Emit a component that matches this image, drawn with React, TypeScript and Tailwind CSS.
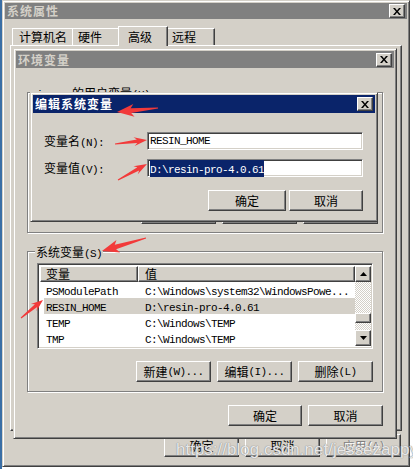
import React from 'react';

const raised =
  'border border-t-white border-l-white border-r-[#404040] border-b-[#404040] shadow-[inset_-1px_-1px_#808080]';
const winFrame =
  'border border-t-[#d4d0c8] border-l-[#d4d0c8] border-r-[#404040] border-b-[#404040] shadow-[inset_1px_1px_#fff,inset_-1px_-1px_#808080] p-[2px] bg-[#d4d0c8]';
const sunken =
  'border border-t-[#808080] border-l-[#808080] border-r-white border-b-white shadow-[inset_1px_1px_#404040,inset_-1px_-1px_#d4d0c8]';
const etched = 'border border-[#808080] shadow-[inset_1px_1px_#fff,1px_1px_#fff]';

// ascii runs in a monospace, chinese in the CJK face, like SimSun does
function Txt({ s }: { s: string }) {
  const parts = s.split(/([\x20-\x7e]+)/).filter((p) => p !== '');
  return (
    <>
      {parts.map((p, i) =>
        /^[\x20-\x7e]+$/.test(p) ? (
          <span key={i} className="font-['Liberation_Mono',monospace] text-[11px] tracking-[-0.6px] whitespace-pre">
            {p}
          </span>
        ) : (
          <span key={i} className="font-['Noto_Sans_CJK_SC',sans-serif] text-[12px]">
            {p}
          </span>
        )
      )}
    </>
  );
}

function CloseBtn() {
  return (
    <div className={`w-[16px] h-[14px] bg-[#d4d0c8] ${raised} flex items-center justify-center`}>
      <svg width="8" height="7" viewBox="0 0 8 7">
        <path d="M0 0h2l2 2.4L6 0h2L5 3.5 8 7H6L4 4.6 2 7H0l3-3.5z" fill="#000" />
      </svg>
    </div>
  );
}

function TitleBar({ title, active, h }: { title: string; active?: boolean; h: string }) {
  return (
    <div
      className={`${h} flex items-center justify-between pl-[2px] pr-[2px] ${
        active ? 'bg-[#0a246a] text-white' : 'bg-[#808080] text-[#d4d0c8]'
      }`}
    >
      <span className="font-['Noto_Sans_CJK_SC',sans-serif] text-[12px] font-bold tracking-[1px] leading-none">
        {title}
      </span>
      <CloseBtn />
    </div>
  );
}

function Btn({ label, w = 'w-[75px]', h = 'h-[21px]', disabled }: { label: string; w?: string; h?: string; disabled?: boolean }) {
  return (
    <div
      className={`${w} ${h} shrink-0 flex items-center justify-center bg-[#d4d0c8] ${raised} leading-[14px] ${
        disabled ? 'text-[#808080] [text-shadow:1px_1px_#fff]' : 'text-black'
      }`}
    >
      <Txt s={label} />
    </div>
  );
}

function ScrollBtn({ up }: { up?: boolean }) {
  return (
    <div className={`h-[16px] bg-[#d4d0c8] ${raised} flex items-center justify-center`}>
      <svg width="7" height="4" viewBox="0 0 7 4">
        <path d={up ? 'M3.5 0L7 4H0z' : 'M0 0h7L3.5 4z'} fill="#000" />
      </svg>
    </div>
  );
}

const rows = [
  ['PSModulePath', 'C:\\Windows\\system32\\WindowsPowe...'],
  ['RESIN_HOME', 'D:\\resin-pro-4.0.61'],
  ['TEMP', 'C:\\Windows\\TEMP'],
  ['TMP', 'C:\\Windows\\TEMP'],
];

function arrowPts(tx: number, ty: number, px: number, py: number, hl: number, hw: number, sw: number) {
  const dx = px - tx;
  const dy = py - ty;
  const L = Math.hypot(dx, dy);
  const ux = dx / L;
  const uy = dy / L;
  const nx = -uy;
  const ny = ux;
  const bx = px - ux * hl;
  const by = py - uy * hl;
  const ix = bx + ux * 3;
  const iy = by + uy * 3;
  const pts = [
    [px, py],
    [bx + nx * hw, by + ny * hw],
    [ix + nx * sw, iy + ny * sw],
    [tx + nx * 0.5, ty + ny * 0.5],
    [tx - nx * 0.5, ty - ny * 0.5],
    [ix - nx * sw, iy - ny * sw],
    [bx - nx * hw, by - ny * hw],
  ];
  return pts.map((p) => p.join(',')).join(' ');
}

const arrows = [
  arrowPts(158, 108, 117, 112, 17, 6.5, 2.4),
  arrowPts(115, 144, 147, 140, 13, 4.5, 1.8),
  arrowPts(118, 180, 147, 164, 13, 4.5, 1.8),
  arrowPts(146, 238, 102, 251, 17, 6.5, 2.4),
  arrowPts(21, 318, 43, 300, 12, 4.5, 1.8),
];

export default function App() {
  return (
    <div className="relative w-[413px] h-[469px] overflow-hidden bg-[linear-gradient(to_right,#3a6ea5_2px,#fff_2px)] text-black">
      {/* 系统属性 */}
      <div className={`absolute left-[2px] top-0 w-[408px] h-[467px] flex flex-col ${winFrame}`}>
        <TitleBar title="系统属性" h="h-[16px]" />
        <div className="flex items-end pl-[7px] mt-[7px] h-[19px]">
          <div className="w-[60px] h-[17px] flex items-center pl-[6px] border-t border-l border-t-white border-l-white leading-[14px]">
            <Txt s="计算机名" />
          </div>
          <div className="w-[48px] h-[17px] flex items-center pl-[5px] border-t border-l border-r border-t-white border-l-white border-r-[#404040] leading-[14px]">
            <Txt s="硬件" />
          </div>
          <div className="relative z-10 -mx-[2px] -mb-[1px] w-[50px] h-[20px] bg-[#d4d0c8] flex items-start pt-[3px] pl-[9px] border-t border-l border-r border-t-white border-l-white border-r-[#404040] shadow-[inset_-1px_0_#808080] leading-[14px]">
            <Txt s="高级" />
          </div>
          <div className="w-[49px] h-[17px] flex items-center pl-[6px] border-t border-r border-t-white border-r-[#404040] shadow-[inset_-1px_0_#808080] leading-[14px]">
            <Txt s="远程" />
          </div>
        </div>
        <div className={`mx-[5px] flex-1 ${raised}`} />
        <div className="flex justify-end gap-[6px] mt-[3px] mb-[7px] pr-[6px]">
          <Btn label="确定" w="w-[75px]" h="h-[23px]" />
          <Btn label="取消" w="w-[75px]" h="h-[23px]" />
          <Btn label="应用(A)" w="w-[75px]" h="h-[23px]" disabled />
        </div>
      </div>

      {/* 环境变量 */}
      <div className={`absolute left-[13px] top-[48px] w-[384px] h-[391px] flex flex-col ${winFrame}`}>
        <TitleBar title="环境变量" h="h-[17px]" />
        <div className={`relative mx-[11px] mt-[24px] h-[141px] ${etched} flex flex-col justify-end pb-[8px]`}>
          <span className="absolute left-[7px] -top-[8px] px-[1px] bg-[#d4d0c8] leading-[14px]">
            <Txt s="jesse 的用户变量(U)" />
          </span>
          <div className="flex justify-end gap-[6px] pr-[4px]">
            <Btn label="新建(N)..." />
            <Btn label="编辑(E)..." />
            <Btn label="删除(D)" />
          </div>
        </div>
        <div className={`relative mx-[11px] mt-[18px] h-[141px] ${etched} flex flex-col px-[9px] pt-[11px]`}>
          <span className="absolute left-[7px] -top-[8px] px-[1px] bg-[#d4d0c8] leading-[14px]">
            <Txt s="系统变量(S)" />
          </span>
          <div className={`h-[86px] bg-white ${sunken} p-[1px] flex`}>
            <div className="flex-1 flex flex-col p-[1px] pr-0">
              <div className="flex h-[16px]">
                <div className={`w-[98px] h-full bg-[#d4d0c8] ${raised} pl-[5px] flex items-center leading-[14px]`}>
                  <Txt s="变量" />
                </div>
                <div className={`flex-1 h-full bg-[#d4d0c8] ${raised} pl-[6px] flex items-center leading-[14px]`}>
                  <Txt s="值" />
                </div>
              </div>
              {rows.map(([k, v], i) => (
                <div key={k} className={`flex h-[16px] items-center ml-[4px] ${i === 1 ? 'bg-[#d4d0c8]' : ''}`}>
                  <div className="w-[94px] pl-[2px] leading-[14px]">
                    <Txt s={k} />
                  </div>
                  <div className="flex-1 pl-[7px] leading-[14px]">
                    <Txt s={v} />
                  </div>
                </div>
              ))}
            </div>
            <div className="w-[16px] flex flex-col py-[1px]">
              <ScrollBtn up />
              <div className="flex-1 flex flex-col bg-[image:repeating-conic-gradient(#d4d0c8_0_25%,#fff_0_50%)] bg-[length:2px_2px]">
                <div className="h-[31px]" />
                <div className={`h-[10px] bg-[#d4d0c8] ${raised}`} />
              </div>
              <ScrollBtn />
            </div>
          </div>
          <div className="flex justify-end gap-[6px] mt-[12px]">
            <Btn label="新建(W)..." />
            <Btn label="编辑(I)..." />
            <Btn label="删除(L)" />
          </div>
        </div>
        <div className="flex justify-end gap-[6px] mt-[13px] pr-[11px]">
          <Btn label="确定" w="w-[74px]" />
          <Btn label="取消" w="w-[75px]" />
        </div>
      </div>

      {/* 编辑系统变量 */}
      <div className={`absolute left-[30px] top-[92px] w-[348px] h-[130px] flex flex-col ${winFrame}`}>
        <TitleBar title="编辑系统变量" active h="h-[18px]" />
        <div className="flex items-center h-[18px] mt-[19px] pl-[11px] pr-[12px]">
          <div className="w-[103px] leading-[14px]">
            <Txt s="变量名(N):" />
          </div>
          <div className={`flex-1 h-full bg-white ${sunken} flex items-center pl-[2px] leading-[14px]`}>
            <Txt s="RESIN_HOME" />
          </div>
        </div>
        <div className="flex items-center h-[18px] mt-[9px] pl-[11px] pr-[12px]">
          <div className="w-[103px] leading-[14px]">
            <Txt s="变量值(V):" />
          </div>
          <div className={`flex-1 h-full bg-white ${sunken} flex items-center pl-[2px] leading-[14px]`}>
            <span className="bg-[#0a246a] text-white">
              <Txt s="D:\resin-pro-4.0.61" />
            </span>
          </div>
        </div>
        <div className="flex justify-end gap-[3px] mt-[13px] pr-[12px]">
          <Btn label="确定" w="w-[78px]" />
          <Btn label="取消" w="w-[74px]" />
        </div>
      </div>

      {/* 红色箭头 */}
      <svg className="absolute inset-0 pointer-events-none" width="413" height="469">
        {arrows.map((p, i) => (
          <polygon key={i} points={p} fill="#f23a3a" />
        ))}
      </svg>

      {/* 水印 */}
      <span className="absolute left-[176px] top-[441px] font-['Liberation_Sans',sans-serif] text-[17px] leading-none text-white/80 [text-shadow:0_0_1px_#8a8a8a,0_0_1px_#8a8a8a] pointer-events-none">
        https://blog.csdn.net/jessezappy
      </span>
    </div>
  );
}
